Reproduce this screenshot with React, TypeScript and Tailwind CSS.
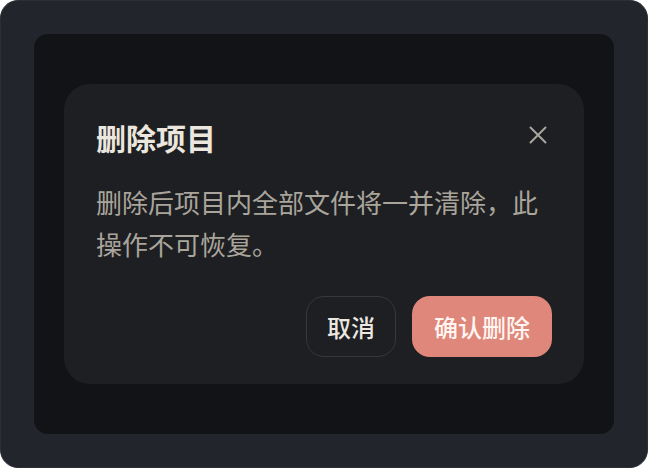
import { useState } from "react";

const font = { fontFamily: '"Noto Sans CJK SC", "Noto Sans", sans-serif' };

export default function App() {
  const [open, setOpen] = useState(true);

  return (
    <div
      className="flex h-[468px] w-[648px] rounded-[18px] border border-[#2c2f35] bg-[#22252b] p-[33px]"
      style={font}
    >
      {/* Backdrop panel */}
      <div className="flex flex-1 items-center justify-center rounded-[14px] bg-[#121316]">
        {open && (
          <div className="flex h-[300px] w-[520px] flex-col rounded-[26px] bg-[#1d1f23] px-8 pb-[27px] pt-[35px]">
            <div className="flex items-center justify-between">
              <h2 className="text-[30px] font-bold leading-[36px] text-[#ebe7df]">删除项目</h2>
              <button
                onClick={() => setOpen(false)}
                className="-mt-1 flex size-7 items-center justify-center text-[#a9a59d]"
              >
                <svg width="18" height="18" viewBox="0 0 18 18" fill="none" stroke="currentColor" strokeWidth="2" strokeLinecap="round">
                  <path d="M1.5 1.5l15 15M16.5 1.5l-15 15" />
                </svg>
              </button>
            </div>

            <p className="mt-[26px] text-[26px] leading-[42px] text-[#aaa59b]">
              删除后项目内全部文件将一并清除，此操作不可恢复。
            </p>

            {/* Actions */}
            <div className="mt-auto flex justify-end gap-4">
              <button className="h-[61px] rounded-[18px] border border-[#36383d] px-5 text-[24px] font-medium text-[#ece8e0]">
                取消
              </button>
              <button className="h-[61px] rounded-[18px] bg-[#e0877b] px-[22px] text-[24px] font-medium text-[#fff6f1]">
                确认删除
              </button>
            </div>
          </div>
        )}
      </div>
    </div>
  );
}
